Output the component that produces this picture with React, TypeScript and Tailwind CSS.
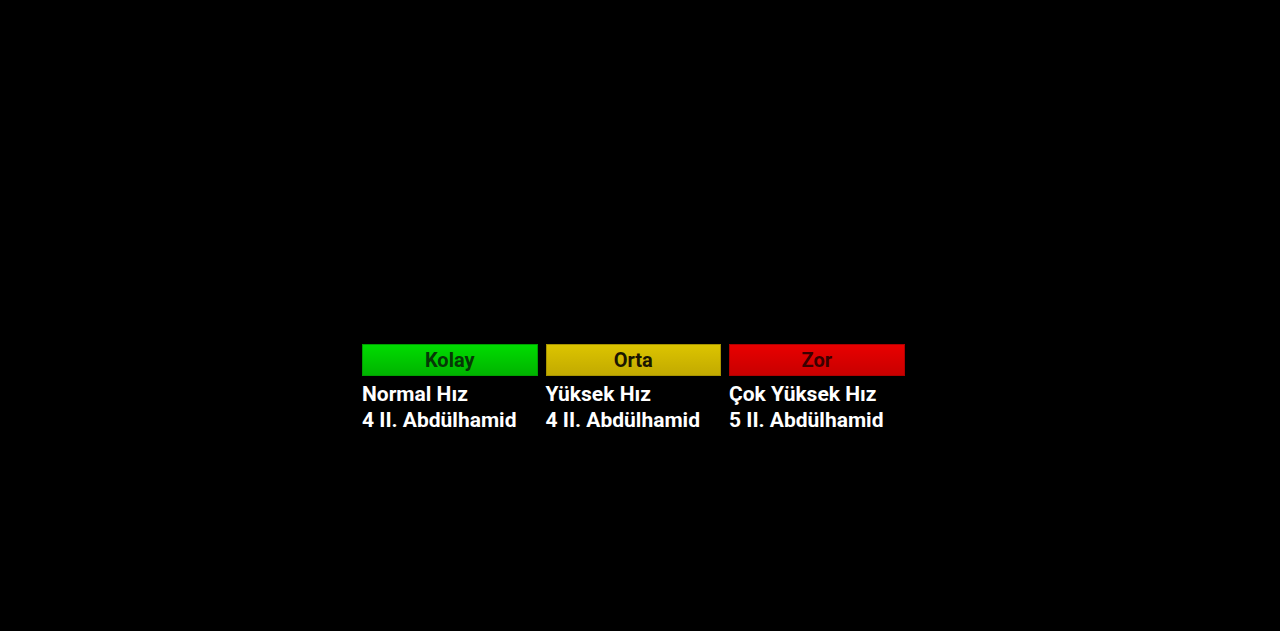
const levels = [
  {
    label: "Kolay",
    speed: "Normal Hız",
    count: "4 II. Abdülhamid",
    btn: "bg-gradient-to-b from-[#00dc00] to-[#00b400] border-[#00a000]",
    text: "text-[#063806]",
  },
  {
    label: "Orta",
    speed: "Yüksek Hız",
    count: "4 II. Abdülhamid",
    btn: "bg-gradient-to-b from-[#dcc400] to-[#c2aa00] border-[#a89400]",
    text: "text-[#1a1600]",
  },
  {
    label: "Zor",
    speed: "Çok Yüksek Hız",
    count: "5 II. Abdülhamid",
    btn: "bg-gradient-to-b from-[#e80000] to-[#c80000] border-[#b00000]",
    text: "text-[#3a0000]",
  },
];

export default function App() {
  return (
    <div
      className="h-[631px] w-[1280px] overflow-hidden bg-black pl-[362px] pt-[344px]"
      style={{ fontFamily: "Roboto, 'Liberation Sans', sans-serif" }}
    >
      <div className="flex gap-2">
        {levels.map((l) => (
          <div key={l.label} className="w-[175.5px]">
            <button
              className={`flex h-[32px] w-full items-center justify-center border text-[20px] font-bold ${l.btn} ${l.text}`}
            >
              {l.label}
            </button>
            <div className="mt-[5px] whitespace-nowrap text-[21px] font-bold leading-[26px] text-white">
              <div>{l.speed}</div>
              <div>{l.count}</div>
            </div>
          </div>
        ))}
      </div>
    </div>
  );
}
